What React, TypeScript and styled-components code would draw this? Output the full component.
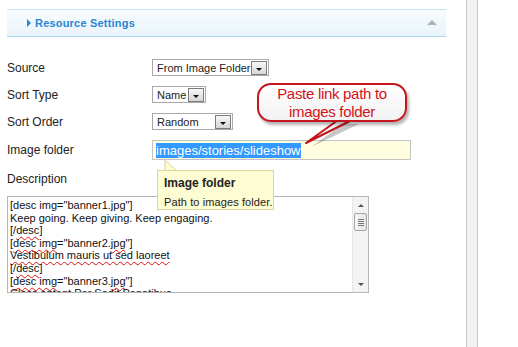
import React from "react";
import styled, { createGlobalStyle } from "styled-components";

const GlobalStyle = createGlobalStyle`
  html, body {
    margin: 0;
    padding: 0;
    background: #fff;
  }
  body {
    font-family: "Liberation Sans", Arial, sans-serif;
    color: #222;
  }
`;

const Page = styled.div`
  position: relative;
  display: flex;
  width: 518px;
  height: 347px;
  overflow: hidden;
  background: #fff;
`;

const Main = styled.div`
  width: 466px;
  padding: 9px 0 0 7px;
  box-sizing: border-box;
`;

const SideStrip = styled.div`
  width: 12px;
  height: 100%;
  box-sizing: border-box;
  border-left: 1px solid #c9c9c9;
  border-right: 1px solid #c9c9c9;
  background: #f2f2f2;
`;

const PanelHeader = styled.div`
  width: 439px;
  height: 28px;
  box-sizing: border-box;
  display: flex;
  align-items: center;
  padding: 0 9px 0 20px;
  border-top: 1px solid #c3e3f1;
  border-bottom: 1px solid #a9d8ec;
  background: linear-gradient(#f8fcfe, #e8f4fb);
`;

const ExpandArrow = styled.span`
  width: 0;
  height: 0;
  border-top: 4px solid transparent;
  border-bottom: 4px solid transparent;
  border-left: 4px solid #2b86d2;
  margin-right: 4px;
`;

const PanelTitle = styled.span`
  flex: 1;
  font-size: 11px;
  font-weight: bold;
  letter-spacing: 0.2px;
  color: #2b86d2;
`;

const CollapseArrow = styled.span`
  width: 0;
  height: 0;
  border-left: 5px solid transparent;
  border-right: 5px solid transparent;
  border-bottom: 5px solid #b0b0b0;
  margin-top: -1px;
`;

const Form = styled.div`
  margin-top: 22px;
  display: flex;
  flex-direction: column;
  gap: 10px;
`;

const Row = styled.div<{ $h: number }>`
  display: flex;
  align-items: center;
  height: ${(p) => p.$h}px;
`;

const Label = styled.div`
  width: 145px;
  font-size: 12px;
  color: #222;
`;

const Select = styled.div<{ $w: number }>`
  width: ${(p) => p.$w}px;
  height: 17px;
  box-sizing: border-box;
  border: 1px solid #a9a9a9;
  background: #fff;
  display: flex;
  align-items: center;
  justify-content: space-between;
  padding: 0 1px 0 4px;
  font-size: 11px;
  color: #222;
`;

const DropButton = styled.span`
  width: 16px;
  height: 14px;
  box-sizing: border-box;
  border: 1px solid #7d7d7d;
  background: linear-gradient(#f7f7f7, #d6d6d6);
  display: flex;
  align-items: flex-end;
  justify-content: center;
  padding-bottom: 3px;

  &::after {
    content: "";
    width: 0;
    height: 0;
    border-left: 3px solid transparent;
    border-right: 3px solid transparent;
    border-top: 3px solid #111;
  }
`;

const TextInput = styled.div`
  width: 259px;
  height: 20px;
  box-sizing: border-box;
  border: 1px solid #c4c4c4;
  background: #ffffe0;
  display: flex;
  align-items: center;
  padding-left: 3px;
  font-size: 13px;
`;

const Selected = styled.span`
  background: #3399ff;
  color: #fff;
  line-height: 15px;
`;

const DescLabel = styled(Label)`
  margin-top: 2px;
  line-height: 14px;
`;

const TextArea = styled.div`
  width: 362px;
  height: 97px;
  box-sizing: border-box;
  border: 1px solid #b5b5b5;
  display: flex;
  background: #fff;
`;

const TextContent = styled.div`
  flex: 1;
  overflow: hidden;
  padding: 2px 2px 0 2px;
  font-size: 11px;
  line-height: 12.6px;
  color: #111;
  white-space: nowrap;
`;

const Spell = styled.span`
  text-decoration: underline wavy #e01010;
  text-decoration-thickness: 1px;
  text-underline-offset: 2px;
  text-decoration-skip-ink: none;
`;

const Scrollbar = styled.div`
  width: 16px;
  background: #f3f3f3;
  border-left: 1px solid #e8e8e8;
  display: flex;
  flex-direction: column;
  align-items: center;
  padding: 7px 0 6px;
  box-sizing: border-box;
`;

const ScrollArrow = styled.span<{ $up?: boolean }>`
  width: 0;
  height: 0;
  border-left: 3px solid transparent;
  border-right: 3px solid transparent;
  ${(p) =>
    p.$up
      ? "border-bottom: 3px solid #555;"
      : "border-top: 3px solid #555; margin-top: auto;"}
`;

const Thumb = styled.span`
  width: 13px;
  height: 18px;
  margin-top: 6px;
  box-sizing: border-box;
  border: 1px solid #a5a5a5;
  border-radius: 2px;
  background: linear-gradient(90deg, #f7f7f7, #e4e4e4);
  display: flex;
  flex-direction: column;
  align-items: center;
  justify-content: center;
  gap: 1px;
`;

const Grip = styled.span`
  width: 6px;
  height: 1px;
  background: #777;
`;

const Callout = styled.div`
  position: absolute;
  left: 257px;
  top: 83px;
  width: 150px;
  height: 39px;
  box-sizing: border-box;
  border: 2px solid #c4161c;
  border-radius: 14px;
  background: linear-gradient(#ffffff, #f2f2f2);
  box-shadow: 2px 3px 3px rgba(0, 0, 0, 0.3);
  color: #d0121b;
  font-size: 15px;
  letter-spacing: -0.3px;
  line-height: 18px;
  text-align: center;
`;

const CalloutTail = styled.svg`
  position: absolute;
  left: 296px;
  top: 118px;
  overflow: visible;
`;

const Tooltip = styled.div`
  position: absolute;
  left: 157px;
  top: 170px;
  width: 117px;
  height: 40px;
  box-sizing: border-box;
  border: 1px solid #dcd59c;
  background: #fdfcd3;
  padding: 5px 0 0 6px;
  font-size: 12px;
  color: #222;
  white-space: nowrap;
`;

const TooltipTitle = styled.div`
  font-weight: bold;
  line-height: 15px;
`;

const TooltipBody = styled.div`
  margin-top: 4px;
  line-height: 14px;
  font-size: 11px;
  letter-spacing: 0.1px;
`;

const TooltipPointer = styled.svg`
  position: absolute;
  left: 164px;
  top: 160px;
  overflow: visible;
`;

const lines: React.ReactNode[] = [
  <>[desc img="banner1.jpg"]</>,
  <>Keep going. Keep giving. Keep engaging.</>,
  <>[/<Spell>desc</Spell>]</>,
  <>
    [<Spell>desc img</Spell>="banner2.<Spell>jpg</Spell>"]
  </>,
  <>
    <Spell>Vestibulum mauris ut sed laoreet</Spell>
  </>,
  <>[/<Spell>desc</Spell>]</>,
  <>
    [<Spell>desc img</Spell>="banner3.<Spell>jpg</Spell>"]
  </>,
  <>Class aptent Per Sedit Penatibus</>,
];

export default function App() {
  return (
    <>
      <GlobalStyle />
      <Page>
        <Main>
          <PanelHeader>
            <ExpandArrow />
            <PanelTitle>Resource Settings</PanelTitle>
            <CollapseArrow />
          </PanelHeader>

          <Form>
            <Row $h={17}>
              <Label>Source</Label>
              <Select $w={117}>
                From Image Folder
                <DropButton />
              </Select>
            </Row>
            <Row $h={17}>
              <Label>Sort Type</Label>
              <Select $w={54}>
                Name
                <DropButton />
              </Select>
            </Row>
            <Row $h={17}>
              <Label>Sort Order</Label>
              <Select $w={81}>
                Random
                <DropButton />
              </Select>
            </Row>
            <Row $h={20}>
              <Label>Image folder</Label>
              <TextInput>
                <Selected>images/stories/slideshow</Selected>
              </TextInput>
            </Row>
            <DescLabel>Description</DescLabel>
            <TextArea>
              <TextContent>
                {lines.map((l, i) => (
                  <div key={i}>{l}</div>
                ))}
              </TextContent>
              <Scrollbar>
                <ScrollArrow $up />
                <Thumb>
                  <Grip />
                  <Grip />
                  <Grip />
                  <Grip />
                </Thumb>
                <ScrollArrow />
              </Scrollbar>
            </TextArea>
          </Form>
        </Main>
        <SideStrip />

        <CalloutTail width="60" height="30">
          <polygon points="12,27 44,4 60,4" fill="rgba(0,0,0,0.22)" transform="translate(3,2)" />
          <polygon points="10,25 42,2 56,2" fill="#fafafa" stroke="#c4161c" strokeWidth="2" strokeLinejoin="round" />
        </CalloutTail>
        <Callout>
          Paste link path to
          <br />
          images folder
        </Callout>

        <TooltipPointer width="14" height="11">
          <polygon points="1,0 1,11 13,11" fill="#fdfcd3" stroke="#dcd59c" strokeWidth="1" />
        </TooltipPointer>
        <Tooltip>
          <TooltipTitle>Image folder</TooltipTitle>
          <TooltipBody>Path to images folder.</TooltipBody>
        </Tooltip>
      </Page>
    </>
  );
}
